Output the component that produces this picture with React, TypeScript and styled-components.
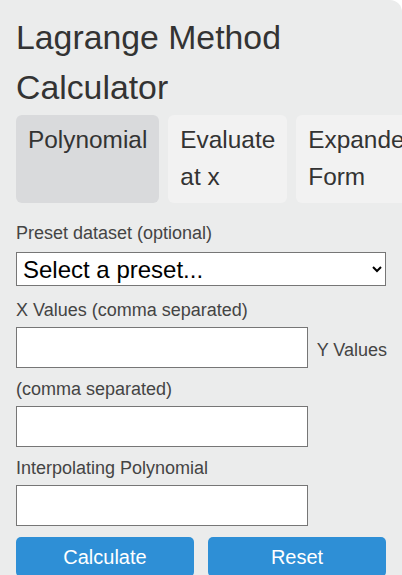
import React from "react";
import styled, { createGlobalStyle } from "styled-components";

const Global = createGlobalStyle`
  html, body { margin: 0; padding: 0; background: #ffffff; }
  body { font-family: "Liberation Sans", Arial, sans-serif; }
  * { box-sizing: border-box; }
`;

const Card = styled.div`
  background: #ebecec;
  border-top-right-radius: 12px;
  padding: 12px 6px 0 16px;
  min-height: 575px;
  color: #333333;
  overflow: hidden;
`;

const Title = styled.h1`
  margin: 0;
  font-size: 33.8px;
  line-height: 50px;
  font-weight: 400;
  color: #333333;
`;

const Tabs = styled.div`
  display: flex;
  gap: 9px;
  margin-top: 3px;
  margin-right: -60px;
`;

const Tab = styled.div<{ $active?: boolean }>`
  flex: 0 0 auto;
  width: min-content;
  border-radius: 6px;
  background: ${(p) => (p.$active ? "#d9dadc" : "#f2f2f2")};
  color: #333333;
  font-size: 24.4px;
  line-height: 37px;
  padding: 6px 12px 8px 12px;
  cursor: pointer;
`;

const Form = styled.div`
  margin-top: 20px;
  font-size: 18px;
  color: #444444;
`;

const Label = styled.label`
  font-size: 18px;
  color: #444444;
`;

const Select = styled.select`
  display: block;
  width: 370px;
  height: 34px;
  margin: 8px 0 14px 0;
  font-family: "Liberation Sans", Arial, sans-serif;
  font-size: 24px;
  color: #000000;
  background: #ffffff;
  border: 1px solid #767676;
  border-radius: 0;
  padding: 0 2px;
`;

const Input = styled.input`
  display: inline-block;
  vertical-align: baseline;
  width: 292px;
  height: 41px;
  margin: 6px 4px 11px 0;
  font-family: "Liberation Sans", Arial, sans-serif;
  font-size: 24px;
  background: #ffffff;
  border: 1px solid #767676;
  border-radius: 0;
  padding: 0 4px;
`;

const Buttons = styled.div`
  display: flex;
  gap: 14px;
  width: 370px;
  margin-top: 0;
`;

const Button = styled.button`
  flex: 1;
  height: 40px;
  border: none;
  border-radius: 5px;
  background: #2e8fd6;
  color: #ffffff;
  font-family: "Liberation Sans", Arial, sans-serif;
  font-size: 20px;
  padding: 0;
`;

export default function App() {
  return (
    <>
      <Global />
      <Card>
        <Title>Lagrange Method Calculator</Title>
        <Tabs>
          <Tab $active>Polynomial</Tab>
          <Tab>Evaluate at x</Tab>
          <Tab>Expanded Form</Tab>
        </Tabs>
        <Form>
          <Label>Preset dataset (optional)</Label>
          <Select defaultValue="">
            <option value="">Select a preset...</option>
          </Select>
          <Label>X Values (comma separated)</Label>
          <br />
          <Input type="text" /> <Label>Y Values (comma separated)</Label>
          <br />
          <Input type="text" />
          <br />
          <Label>Interpolating Polynomial</Label>
          <br />
          <Input type="text" readOnly />
          <Buttons>
            <Button>Calculate</Button>
            <Button>Reset</Button>
          </Buttons>
        </Form>
      </Card>
    </>
  );
}
